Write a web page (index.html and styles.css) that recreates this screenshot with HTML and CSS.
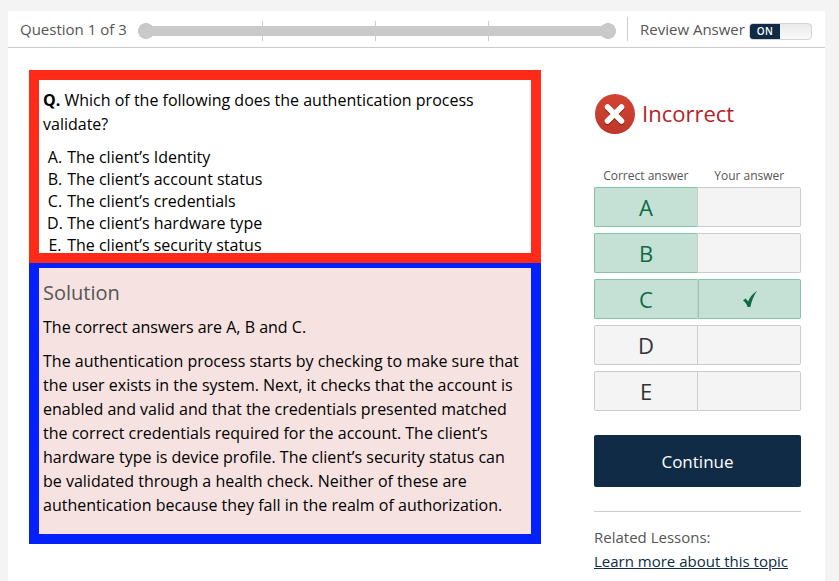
FILE: index.html
```html
<!DOCTYPE html>
<html lang="en">
  <head>
    <meta charset="UTF-8" />
    <title>Question 1 of 3</title>
    <link rel="stylesheet" href="styles.css">
  </head>
  <body>
    <div class="page">
      <!-- Top bar -->
      <div class="topbar">
        <span class="counter">Question 1 of 3</span>
        <div class="progress">
          <span class="tick"></span>
          <span class="tick"></span>
          <span class="tick"></span>
        </div>
        <div class="review">
          <span>Review Answer</span>
          <div class="toggle"><span class="toggle-on">ON</span></div>
        </div>
      </div>

      <div class="content">
        <!-- Left column -->
        <div class="main">
          <div class="question">
            <p class="question-text"><b>Q.</b> Which of the following does the authentication process validate?</p>
            <ul class="options">
              <li><span class="letter">A.</span> The client’s Identity</li>
              <li><span class="letter">B.</span> The client’s account status</li>
              <li><span class="letter">C.</span> The client’s credentials</li>
              <li><span class="letter">D.</span> The client’s hardware type</li>
              <li><span class="letter">E.</span> The client’s security status</li>
            </ul>
          </div>
          <div class="solution">
            <h2>Solution</h2>
            <p class="solution-short">The correct answers are A, B and C.</p>
            <p>The authentication process starts by checking to make sure that the user exists in the system. Next, it checks that the account is enabled and valid and that the credentials presented matched the correct credentials required for the account. The client’s hardware type is device profile. The client’s security status can be validated through a health check. Neither of these are authentication because they fall in the realm of authorization.</p>
          </div>
        </div>

        <!-- Right column -->
        <div class="side">
          <div class="result">
            <svg class="result-icon" width="40" height="40" viewBox="0 0 40 40">
              <defs>
                <linearGradient id="redFill" x1="0" y1="0" x2="0" y2="1">
                  <stop offset="0" stop-color="#d24433" />
                  <stop offset="1" stop-color="#bf3729" />
                </linearGradient>
              </defs>
              <circle cx="20" cy="20" r="20" fill="url(#redFill)" />
              <path d="M12.5 13 L26.5 27 M26.5 13 L12.5 27" stroke="#8f2a20" stroke-width="5.5" stroke-linecap="round" transform="translate(0 1.5)" />
              <path d="M12.5 13 L26.5 27 M26.5 13 L12.5 27" stroke="#fff" stroke-width="5.5" stroke-linecap="round" />
            </svg>
            <span class="result-text">Incorrect</span>
          </div>
          <div class="answer-heads">
            <span>Correct answer</span>
            <span>Your answer</span>
          </div>
          <div class="answers">
            <div class="answer">
              <div class="cell right">A</div>
              <div class="cell"></div>
            </div>
            <div class="answer">
              <div class="cell right">B</div>
              <div class="cell"></div>
            </div>
            <div class="answer">
              <div class="cell right">C</div>
              <div class="cell right picked">
                <svg width="14" height="16" viewBox="0 0 14 16">
                  <path d="M0 9.5 L2.6 7.6 L5.2 10.4 C6.6 6.6 9.4 2.6 14 0 C10.8 4.4 8.6 10 7.4 16 L4.6 16 C3.8 13.4 2.2 11 0 9.5 Z" fill="#0f6b45" />
                </svg>
              </div>
            </div>
            <div class="answer">
              <div class="cell">D</div>
              <div class="cell"></div>
            </div>
            <div class="answer">
              <div class="cell">E</div>
              <div class="cell"></div>
            </div>
          </div>
          <button class="continue">Continue</button>
          <div class="related">
            <div class="related-title">Related Lessons:</div>
            <a href="#">Learn more about this topic</a>
          </div>
        </div>
      </div>
    </div>
  </body>
</html>
```

FILE: styles.css
```css
* {
  margin: 0;
  padding: 0;
  box-sizing: border-box;
}

html,
body {
  height: 581px;
  overflow: hidden;
}

body {
  font-family: "Open Sans", sans-serif;
  background: #f4f4f4;
  color: #000;
  padding: 11px 14px 0 8px;
}

.page {
  background: #fff;
  height: 570px;
}

/* Top bar */
.topbar {
  display: flex;
  align-items: center;
  height: 37px;
  padding: 0 13px 0 12px;
  border-bottom: 1px solid #ccc;
  color: #555;
  font-size: 15px;
}

.counter {
  width: 118px;
  flex: none;
}

.progress {
  position: relative;
  display: flex;
  justify-content: center;
  gap: 112px;
  align-items: center;
  width: 478px;
  height: 20px;
  flex: none;
  margin-top: 4px;
  margin-right: 11px;
  padding-right: 4px;
}

.progress::before {
  content: "";
  position: absolute;
  left: 8px;
  right: 8px;
  top: 5px;
  height: 10px;
  background: #c9c9c9;
}

/* end dots of the bar */
.progress::after {
  content: "";
  position: absolute;
  left: 0;
  right: 0;
  top: 2px;
  height: 16px;
  background:
    radial-gradient(circle 8px at 8px 8px, #c9c9c9 98%, transparent) left / 16px 16px no-repeat,
    radial-gradient(circle 8px at 8px 8px, #c9c9c9 98%, transparent) right / 16px 16px no-repeat;
}

.tick {
  position: relative;
  width: 1px;
  height: 20px;
  background: #ccc;
}

.review {
  display: flex;
  align-items: center;
  gap: 4px;
  height: 24px;
  padding-left: 12px;
  border-left: 1px solid #ccc;
}

.toggle {
  width: 63px;
  height: 17px;
  margin-top: 4px;
  border: 1px solid #d4d4d4;
  border-radius: 4px;
  background: linear-gradient(#e9e9e9, #fafafa);
  overflow: hidden;
}

.toggle-on {
  display: block;
  width: 30px;
  height: 15px;
  background: #0f2b46;
  color: #fff;
  font-size: 10px;
  font-weight: 600;
  line-height: 15px;
  text-align: center;
  letter-spacing: 0.3px;
}

/* Main layout */
.content {
  display: flex;
  padding: 22px 24px 0 21px;
  gap: 53px;
}

.main {
  width: 512px;
  flex: none;
}

.question {
  height: 193px;
  border: 10px solid #ff2a18;
  padding: 8px 4px 0;
  overflow: hidden;
  font-size: 16px;
}

.question-text {
  line-height: 24px;
  margin-bottom: 10px;
}

.options {
  list-style: none;
  line-height: 22px;
}

/* letters sit centered in their own column so that the texts line up */
.letter {
  display: inline-block;
  width: 16px;
  margin-left: 4px;
  text-align: center;
}

.solution {
  height: 281px;
  border: 10px solid #0320ff;
  border-top-width: 5px;
  background: #f6e2e1;
  padding: 11px 4px 0;
  font-size: 16px;
  line-height: 24px;
}

.solution h2 {
  font-size: 20px;
  font-weight: 400;
  line-height: 27px;
  color: #555;
  margin-bottom: 9px;
}

.solution-short {
  margin-bottom: 10px;
}

/* Right column */
.side {
  width: 207px;
  flex: none;
}

.result {
  display: flex;
  align-items: center;
  gap: 7px;
  height: 40px;
  margin-top: 24px;
  margin-bottom: 33px;
  margin-left: 1px;
  color: #b3222a;
  font-size: 22px;
}

.result-icon {
  flex: none;
}

.result-text {
  margin-bottom: 2px;
}

.answer-heads {
  display: flex;
  font-size: 12px;
  line-height: 17px;
  color: #555;
  margin-bottom: 3px;
}

.answer-heads span {
  width: 50%;
  text-align: center;
}

.answers {
  display: flex;
  flex-direction: column;
  gap: 6px;
}

.answer {
  display: flex;
  height: 40px;
}

.cell {
  display: flex;
  align-items: center;
  justify-content: center;
  flex: 1;
  background: #f4f4f4;
  border: 1px solid #ccc;
  border-left: none;
  border-radius: 0 2px 2px 0;
  font-size: 22px;
  color: #333;
}

.cell:first-child {
  flex: 0 0 104px;
  border-left: 1px solid #ccc;
  border-radius: 2px 0 0 2px;
}

.cell.right {
  background: #c5e1d6;
  border-color: #85c3a9;
  color: #0f6b45;
}

.answer .cell.right:first-child {
  border-right-color: #ccc;
}

.answer .cell.picked {
  border-left: 1px solid #94c6b2;
}

.continue {
  display: block;
  width: 100%;
  height: 52px;
  margin-top: 24px;
  border: none;
  border-radius: 2px;
  background: #0f2b46;
  color: #fff;
  font-family: inherit;
  font-size: 17px;
  cursor: pointer;
}

.related {
  margin-top: 24px;
  padding-top: 13px;
  border-top: 1px solid #ccc;
  font-size: 15px;
  line-height: 24px;
  color: #555;
}

.related a {
  display: block;
  color: #0f2b46;
}
```
